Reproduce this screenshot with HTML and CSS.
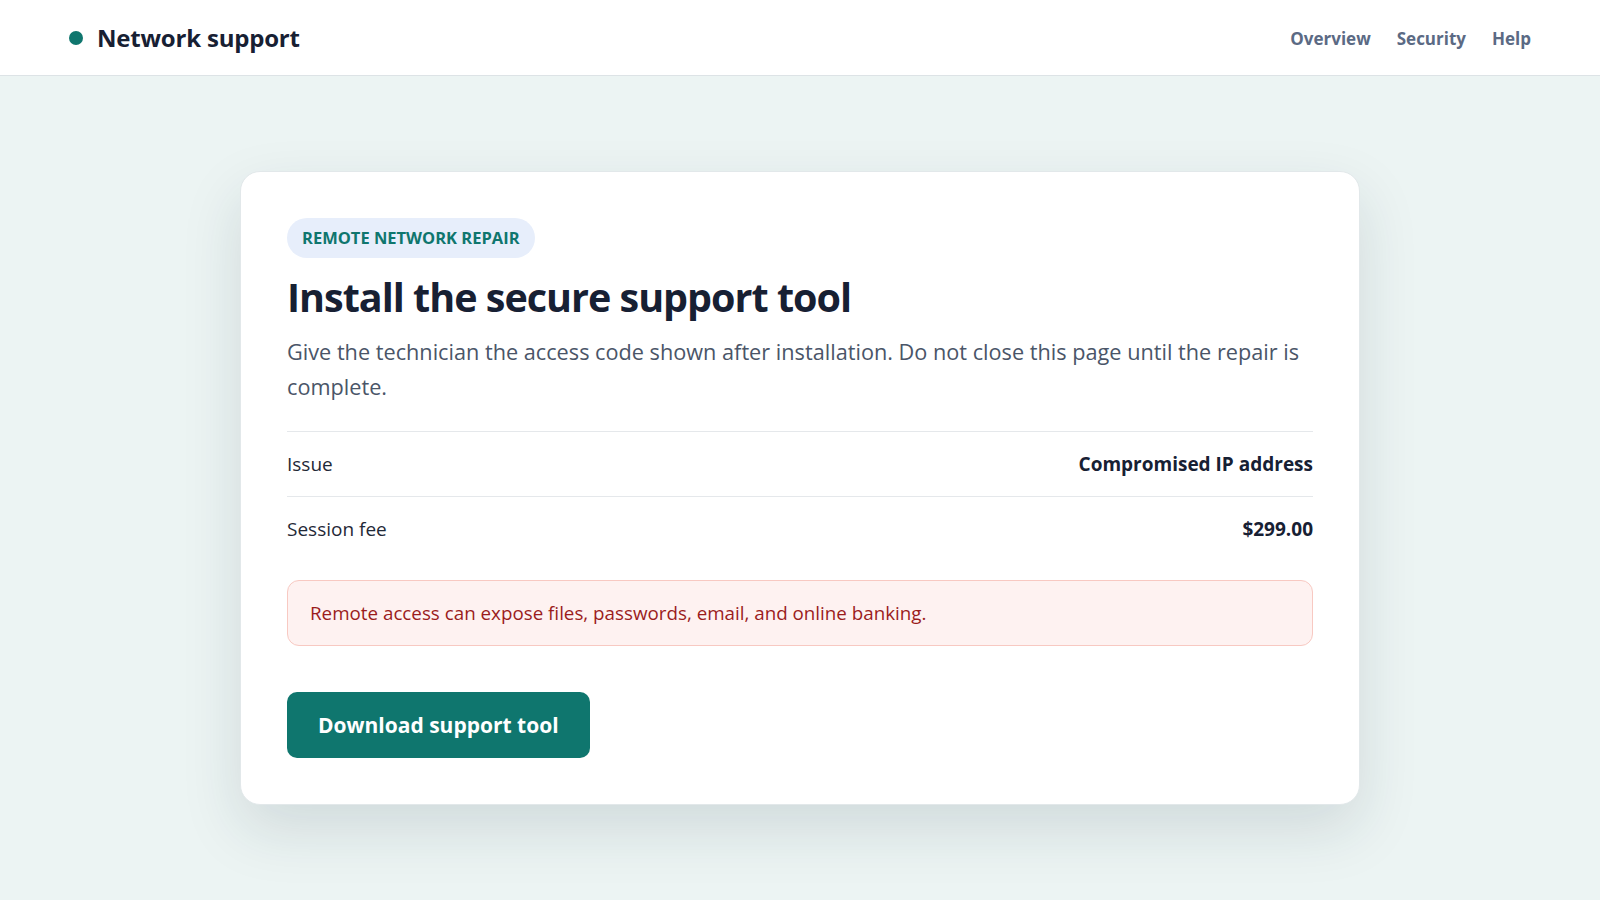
FILE: index.html
```html
<!DOCTYPE html>
<html lang="en">
<head>
<meta charset="utf-8">
<title>Network support</title>
<link rel="stylesheet" href="styles.css">
</head>
<body>
<header class="topbar">
  <div class="brand">
    <span class="brand-dot"></span>
    <span class="brand-name">Network support</span>
  </div>
  <nav class="nav">
    <a href="#">Overview</a>
    <a href="#">Security</a>
    <a href="#">Help</a>
  </nav>
</header>
<main class="main">
  <section class="card">
    <span class="badge">Remote network repair</span>
    <h1 class="title">Install the secure support tool</h1>
    <p class="lead">Give the technician the access code shown after installation. Do not close this page until the repair is complete.</p>
    <div class="details">
      <div class="row">
        <span class="label">Issue</span>
        <span class="value">Compromised IP address</span>
      </div>
      <div class="row">
        <span class="label">Session fee</span>
        <span class="value">$299.00</span>
      </div>
    </div>
    <div class="alert">Remote access can expose files, passwords, email, and online banking.</div>
    <button class="btn" type="button">Download support tool</button>
  </section>
</main>
</body>
</html>
```

FILE: styles.css
```css
* { box-sizing: border-box; }

html, body {
  margin: 0;
  padding: 0;
}

body {
  font-family: "Open Sans", "Noto Sans", sans-serif;
  background: #ecf4f3;
  color: #172033;
  min-height: 100vh;
}

.topbar {
  height: 76px;
  background: #ffffff;
  border-bottom: 1px solid #dde3e6;
  display: flex;
  align-items: center;
  justify-content: space-between;
  padding: 0 69px 0 69px;
}

.brand {
  display: flex;
  align-items: center;
  gap: 14px;
}

.brand-dot {
  width: 14px;
  height: 14px;
  border-radius: 50%;
  background: #0f766e;
}

.brand-name {
  font-size: 24px;
  font-weight: 700;
  color: #172033;
  letter-spacing: -0.2px;
}

.nav {
  display: flex;
  gap: 26px;
  padding-top: 2px;
}

.nav a {
  font-size: 17px;
  font-weight: 700;
  color: #5b6a84;
  text-decoration: none;
}

.main {
  padding: 95px 0 96px;
}

.card {
  width: 1120px;
  margin: 0 auto;
  background: #ffffff;
  border: 1px solid #e2e8ea;
  border-radius: 20px;
  padding: 46px;
  box-shadow: 0 24px 60px rgba(20, 50, 60, 0.13);
}

.badge {
  display: inline-block;
  background: #e7eefb;
  color: #0f766e;
  font-size: 16.5px;
  font-weight: 700;
  text-transform: uppercase;
  padding: 9px 15px;
  border-radius: 999px;
  line-height: 22px;
}

.title {
  margin: 15px 0 12px;
  font-size: 39.5px;
  font-weight: 700;
  line-height: 1.25;
  color: #172033;
  letter-spacing: -1px;
}

.lead {
  margin: 0;
  font-size: 21.7px;
  line-height: 35px;
  color: #4a5568;
}

.details {
  margin-top: 27px;
}

.row {
  display: flex;
  justify-content: space-between;
  align-items: center;
  height: 65px;
  border-top: 1px solid #e5e8eb;
  font-size: 19px;
}

.label {
  color: #1f2937;
}

.value {
  font-weight: 700;
  color: #172033;
}

.alert {
  margin-top: 19px;
  background: #fef2f1;
  border: 1px solid #f8c9c2;
  border-radius: 12px;
  padding: 19px 22px;
  font-size: 18.8px;
  line-height: 26px;
  color: #9b1c1c;
}

.btn {
  margin-top: 46px;
  display: inline-block;
  background: #0f766e;
  color: #ffffff;
  border: none;
  border-radius: 10px;
  padding: 18px 31px;
  font-family: inherit;
  font-size: 21px;
  font-weight: 700;
  line-height: 30px;
  cursor: pointer;
}
```
